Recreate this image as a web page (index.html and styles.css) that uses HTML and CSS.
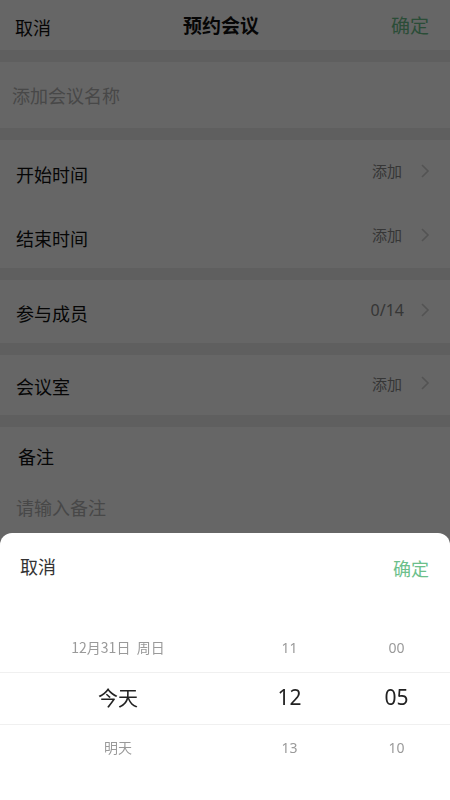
FILE: index.html
```html
<!DOCTYPE html>
<html lang="zh-CN">
<head>
    <meta charset="UTF-8">
    <title>预约会议</title>
    <link rel="stylesheet" href="styles.css">
</head>
<body>
    <header class="top-bar">
        <span class="top-cancel">取消</span>
        <h1 class="top-title">预约会议</h1>
        <span class="top-ok">确定</span>
    </header>

    <div class="gap"></div>
    <div class="name-row">添加会议名称</div>
    <div class="gap"></div>

    <div class="row">
        <span class="row-label">开始时间</span>
        <span class="row-value">添加</span>
        <svg class="chevron" viewBox="0 0 10 16"><path d="M2 2l6 6-6 6" fill="none" stroke="#d0d0d0" stroke-width="1.6"/></svg>
    </div>
    <div class="row row-short">
        <span class="row-label">结束时间</span>
        <span class="row-value">添加</span>
        <svg class="chevron" viewBox="0 0 10 16"><path d="M2 2l6 6-6 6" fill="none" stroke="#d0d0d0" stroke-width="1.6"/></svg>
    </div>
    <div class="gap"></div>
    <div class="row row-short">
        <span class="row-label">参与成员</span>
        <span class="row-value num">0/14</span>
        <svg class="chevron" viewBox="0 0 10 16"><path d="M2 2l6 6-6 6" fill="none" stroke="#d0d0d0" stroke-width="1.6"/></svg>
    </div>
    <div class="gap"></div>
    <div class="row row-room">
        <span class="row-label">会议室</span>
        <span class="row-value">添加</span>
        <svg class="chevron" viewBox="0 0 10 16"><path d="M2 2l6 6-6 6" fill="none" stroke="#d0d0d0" stroke-width="1.6"/></svg>
    </div>
    <div class="gap"></div>
    <div class="note">
        <div class="note-title">备注</div>
        <div class="note-input">请输入备注</div>
    </div>

    <!-- dimmed mask + bottom time picker -->
    <div class="mask"></div>
    <div class="sheet">
        <div class="sheet-head">
            <span class="sheet-cancel">取消</span>
            <span class="sheet-ok">确定</span>
        </div>
        <div class="picker">
            <div class="picker-line line-top"></div>
            <div class="picker-line line-bottom"></div>
            <div class="col col-date">
                <div class="cell">12月31日&nbsp;&nbsp;周日</div>
                <div class="cell active">今天</div>
                <div class="cell">明天</div>
            </div>
            <div class="col">
                <div class="cell num">11</div>
                <div class="cell active num">12</div>
                <div class="cell num">13</div>
            </div>
            <div class="col">
                <div class="cell num">00</div>
                <div class="cell active num">05</div>
                <div class="cell num">10</div>
            </div>
        </div>
    </div>
</body>
</html>
```

FILE: styles.css
```css
* {
    box-sizing: border-box;
    margin: 0;
    padding: 0;
}
body {
    width: 450px;
    height: 800px;
    overflow: hidden;
    background-color: #ffffff;
    font-family: 'Noto Sans CJK SC', 'Noto Sans', sans-serif;
    color: #111111;
}
.num {
    font-family: 'Noto Sans', 'Noto Sans CJK SC', sans-serif;
}
.top-bar {
    height: 50px;
    display: flex;
    align-items: center;
    justify-content: space-between;
    padding: 0 21px 2px 15px;
    background-color: #ffffff;
}
.top-cancel {
    font-size: 18px;
    margin-top: 6px;
}
.top-title {
    font-size: 19px;
    font-weight: bold;
}
.top-ok {
    font-size: 19px;
    color: #6cc08b;
}
.gap {
    height: 12px;
    background-color: #eeeeee;
}
.name-row {
    height: 66px;
    display: flex;
    align-items: center;
    padding-left: 12px;
    font-size: 18px;
    color: #b3b3b3;
}
.row {
    height: 65px;
    display: flex;
    align-items: center;
    padding: 2px 20px 0 16px;
}
.row-short {
    height: 63px;
}
.row-room {
    height: 60px;
}
.row-label {
    font-size: 18px;
    flex: 1;
}
.row-value {
    font-size: 15px;
    color: #888888;
    margin-right: 18px;
    margin-top: -6px;
}
.row-value.num {
    font-size: 16px;
    margin-right: 16px;
}
.chevron {
    width: 10px;
    height: 16px;
    margin-top: -6px;
}
.note {
    padding: 16px 18px 0 16px;
}
.note-title {
    font-size: 18px;
    padding-left: 2px;
}
.note-input {
    font-size: 18px;
    color: #b3b3b3;
    margin-top: 25px;
}

/* overlay layer */
.mask {
    position: fixed;
    inset: 0;
    background-color: rgba(0, 0, 0, 0.6);
}
.sheet {
    position: fixed;
    left: 0;
    right: 0;
    bottom: 0;
    height: 267px;
    background-color: #ffffff;
    border-radius: 12px 12px 0 0;
}
.sheet-head {
    display: flex;
    justify-content: space-between;
    padding: 20px 21px 0 20px;
    font-size: 18px;
}
.sheet-cancel {
    color: #333333;
}
.sheet-ok {
    color: #6cc08b;
    margin-top: 2px;
}
.picker {
    position: relative;
    display: grid;
    grid-template-columns: 236px 1fr 1fr;
    margin-top: 41px;
}
.picker-line {
    position: absolute;
    left: 0;
    right: 0;
    height: 1px;
    background-color: #f0f0f0;
}
.line-top {
    top: 50px;
}
.line-bottom {
    top: 102px;
}
.col {
    display: flex;
    flex-direction: column;
    align-items: center;
}
.cell {
    height: 50px;
    display: flex;
    align-items: center;
    justify-content: center;
    font-size: 14px;
    color: #9a9a9a;
}
.cell.active {
    font-size: 21px;
    color: #222222;
}
.col-date .cell.active {
    font-size: 20px;
}
```
